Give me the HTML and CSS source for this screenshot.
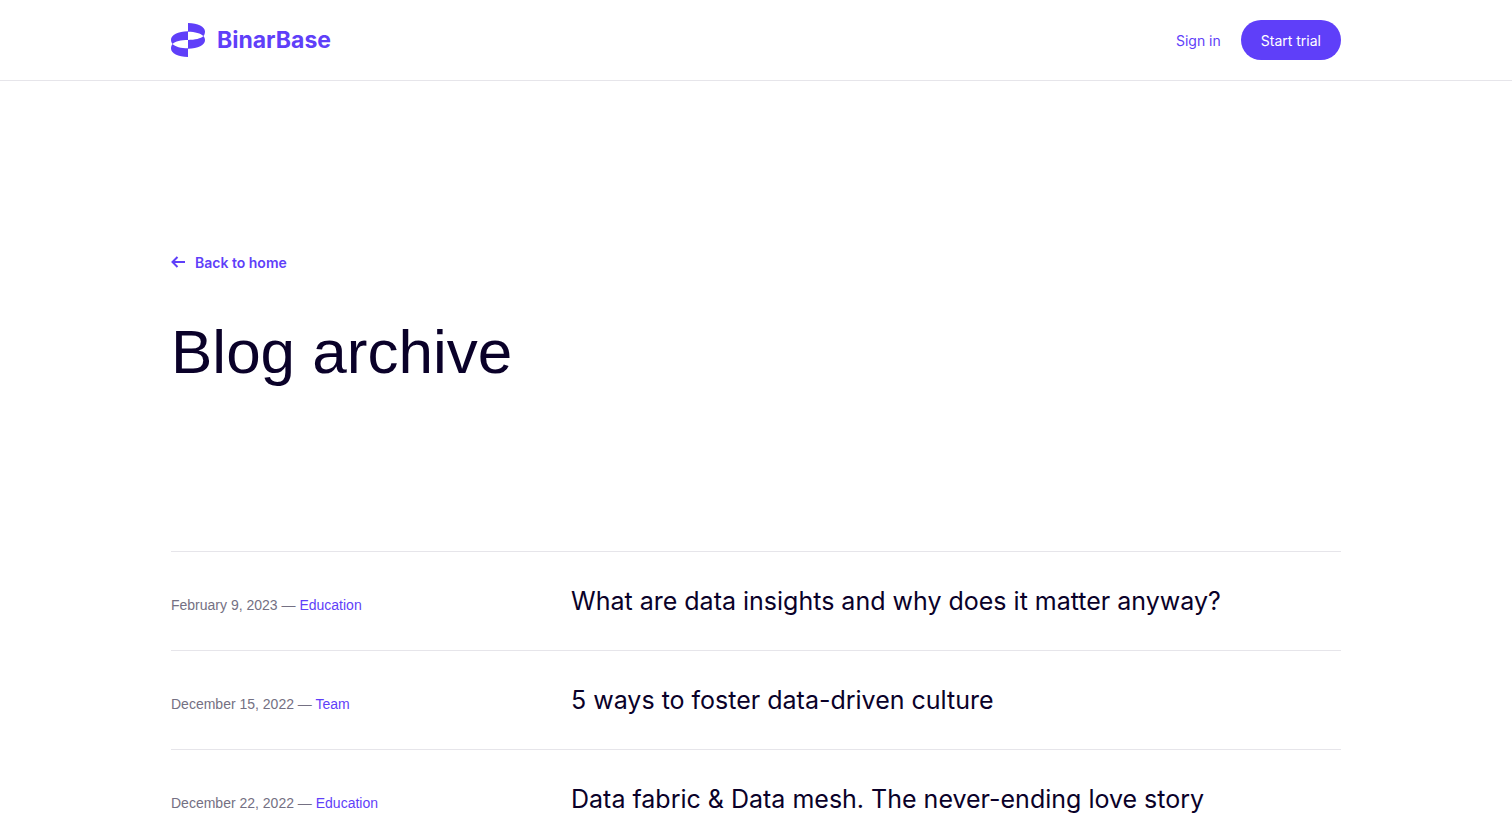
FILE: index.html
```html
<!DOCTYPE html>
<html lang="en">
<head>
<meta charset="utf-8">
<meta name="viewport" content="width=device-width, initial-scale=1">
<title>Blog archive – BinarBase</title>
<link rel="stylesheet" href="styles.css">
</head>
<body>
<header class="header">
  <div class="container header-inner">
    <a class="logo" href="#">
      <svg class="logo-mark" viewBox="0 0 34 34" aria-hidden="true">
        <path d="M17 0C27 0 34 3.700 34 8.500C34 10.300 33.500 11.900 32.400 13.100C33.500 14.300 34 15.600 34 17.200C34 22 27 25.700 17 25.700V17C24 17 30 15.600 32.400 13.100C30 10.300 24 8.700 17 8.700Z"/>
        <path d="M17 34C7 34 0 30.300 0 25.500C0 23.700 .5 22.100 1.600 20.900C.5 19.700 0 18.400 0 16.800C0 12 7 8.300 17 8.300V17C10 17 4 18.400 1.600 20.900C4 23.700 10 25.300 17 25.300Z"/>
      </svg>
      <span class="logo-text">BinarBase</span>
    </a>
    <nav class="nav">
      <a class="link" href="#">Sign in</a>
      <a class="button" href="#">Start trial</a>
    </nav>
  </div>
</header>
<main class="container">
  <section class="hero">
    <a class="back" href="#">
      <svg class="back-icon" viewBox="0 0 14 12" aria-hidden="true"><path d="M6.500 0 1.500 5l5 5M1.500 5H14"/></svg>
      <span>Back to home</span>
    </a>
    <h1 class="title">Blog archive</h1>
  </section>
  <section class="posts">
    <article class="post">
      <p class="meta">February 9, 2023 — <a class="link" href="#">Education</a></p>
      <h2 class="post-title"><a href="#">What are data insights and why does it matter anyway?</a></h2>
    </article>
    <article class="post">
      <p class="meta">December 15, 2022 — <a class="link" href="#">Team</a></p>
      <h2 class="post-title"><a href="#">5 ways to foster data-driven culture</a></h2>
    </article>
    <article class="post">
      <p class="meta">December 22, 2022 — <a class="link" href="#">Education</a></p>
      <h2 class="post-title"><a href="#">Data fabric &amp; Data mesh. The never-ending love story</a></h2>
    </article>
  </section>
</main>
</body>
</html>
```
FILE: styles.css
```css
* { box-sizing: border-box; }
html { scrollbar-width: none; }
body {
  margin: 0;
  background: #fff;
  color: #0a0129;
  font-family: Inter, "Liberation Sans", sans-serif;
  font-size: 14px;
  line-height: 20px;
}
a { color: inherit; text-decoration: none; }
h1, h2, p { margin: 0; font-weight: 400; }
.container {
  max-width: 1210px;
  margin: 0 auto;
  padding: 0 20px;
}
.header { border-bottom: 1px solid #e6e5ea; }
.header-inner {
  display: flex;
  align-items: center;
  justify-content: space-between;
  min-height: 80px;
}
.logo {
  display: flex;
  align-items: center;
  gap: 12px;
  color: #5f3ff9;
}
.logo-mark { width: 34px; height: 34px; fill: currentColor; }
.logo-text { font-size: 23px; font-weight: 700; line-height: 32px; }
.nav { display: flex; align-items: center; gap: 20px; }
.link { color: #5f3ff9; }
.button {
  padding: 11px 20px 9px;
  border-radius: 20px;
  background: #5f3ff9;
  color: #fff;
}
.nav .link { padding: 11px 0 9px; }
.hero { padding: 172px 0 160px; }
.back {
  display: flex;
  width: fit-content;
  align-items: center;
  gap: 10px;
  color: #5f3ff9;
  font-weight: 600;
}
.back-icon {
  width: 14px;
  height: 12px;
  fill: none;
  stroke: currentColor;
  stroke-width: 2;
  overflow: visible;
}
.title {
  margin-top: 40px;
  font-family: "Liberation Sans", Arial, sans-serif;
  font-size: 62px;
  line-height: 78px;
}
.post {
  display: grid;
  grid-template-columns: 380px 1fr;
  align-items: baseline;
  gap: 20px;
  padding: 32px 0;
  border-top: 1px solid #e6e5ea;
}
.meta {
  color: #747083;
  font-family: "Liberation Sans", Arial, sans-serif;
}
.post-title { font-size: 25px; line-height: 34px; }
```
